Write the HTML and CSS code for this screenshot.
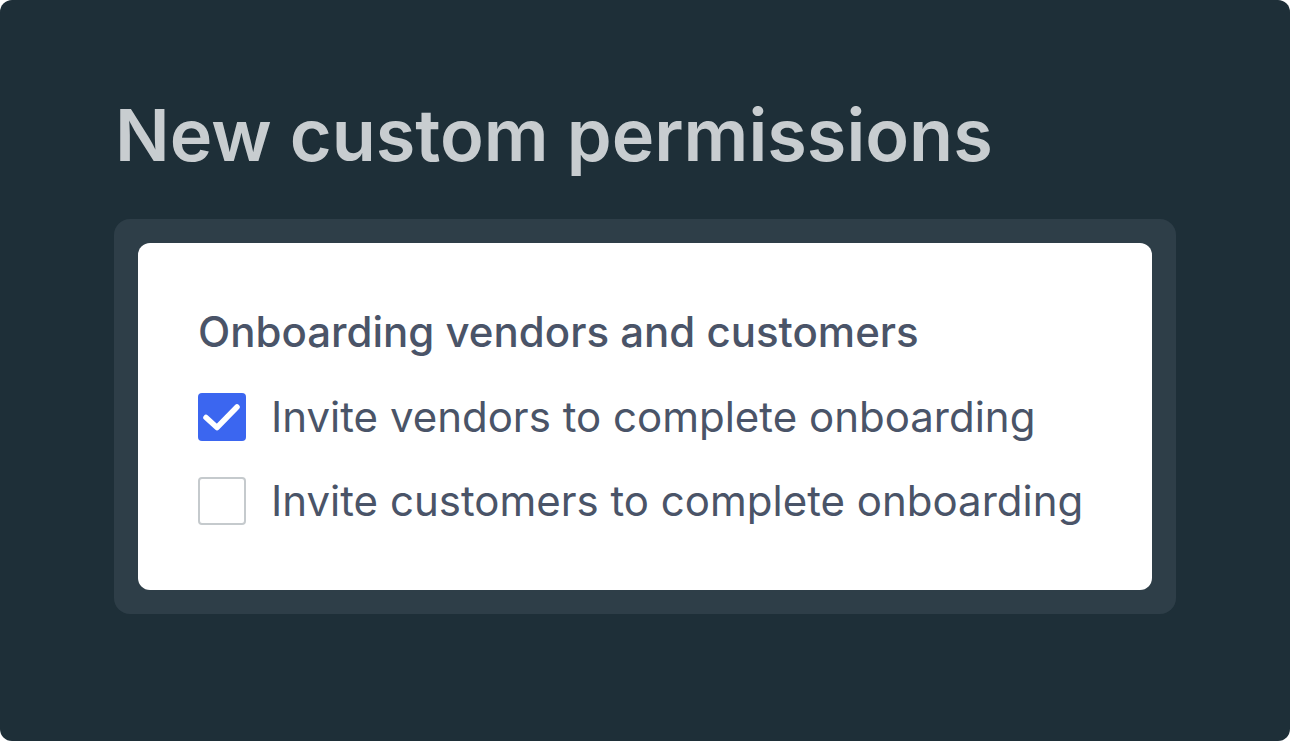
FILE: index.html
```html
<!DOCTYPE html>
<html>
<head>
    <link rel="stylesheet" href="styles.css">
</head>
<body>
    <div class="frame">
        <h1 class="title">New custom permissions</h1>

        <div class="panel">
            <div class="card">
                <h2 class="group-name">Onboarding vendors and customers</h2>

                <label class="option">
                    <span class="box checked">
                        <svg viewBox="0 0 48 48" width="48" height="48">
                            <path d="M8 24.5 L19 34.5 L39 14" fill="none" stroke="#fff" stroke-width="5.5" stroke-linecap="round" stroke-linejoin="round"/>
                        </svg>
                    </span>
                    <span class="option-text">Invite vendors to complete onboarding</span>
                </label>

                <label class="option">
                    <span class="box"></span>
                    <span class="option-text">Invite customers to complete onboarding</span>
                </label>
            </div>
        </div>
    </div>
</body>
</html>
```

FILE: styles.css
```css
html, body {
    margin: 0;
    padding: 0;
    background: #ffffff;
}
body {
    font-family: Inter, "Noto Sans", sans-serif;
}
.frame {
    width: 1290px;
    height: 741px;
    box-sizing: border-box;
    background-color: #1e2f38;
    border-radius: 12px;
    padding: 91px 114px 0 114px;
}
.title {
    margin: 0 0 0 1px;
    font-size: 72px;
    font-weight: 600;
    line-height: 88px;
    color: #c8cdd0;
}
.panel {
    margin-top: 40px;
    width: 1062px;
    box-sizing: border-box;
    padding: 24px;
    background-color: #2e3e48;
    border-radius: 16px;
}
.card {
    background-color: #ffffff;
    border-radius: 12px;
    padding: 63px 60px 65px 60px;
}
.group-name {
    margin: 0 0 35px 0;
    font-size: 42px;
    font-weight: 500;
    line-height: 52px;
    color: #4a5468;
}
.option {
    display: flex;
    align-items: center;
    gap: 25px;
    height: 48px;
}
.option + .option {
    margin-top: 36px;
}
.box {
    width: 48px;
    height: 48px;
    box-sizing: border-box;
    border: 2px solid #c5cacd;
    border-radius: 4px;
    flex-shrink: 0;
}
.box.checked {
    background-color: #3b66f0;
    border: none;
}
.box svg {
    display: block;
}
.option-text {
    font-size: 42px;
    font-weight: 400;
    line-height: 48px;
    color: #4a5468;
}
```
